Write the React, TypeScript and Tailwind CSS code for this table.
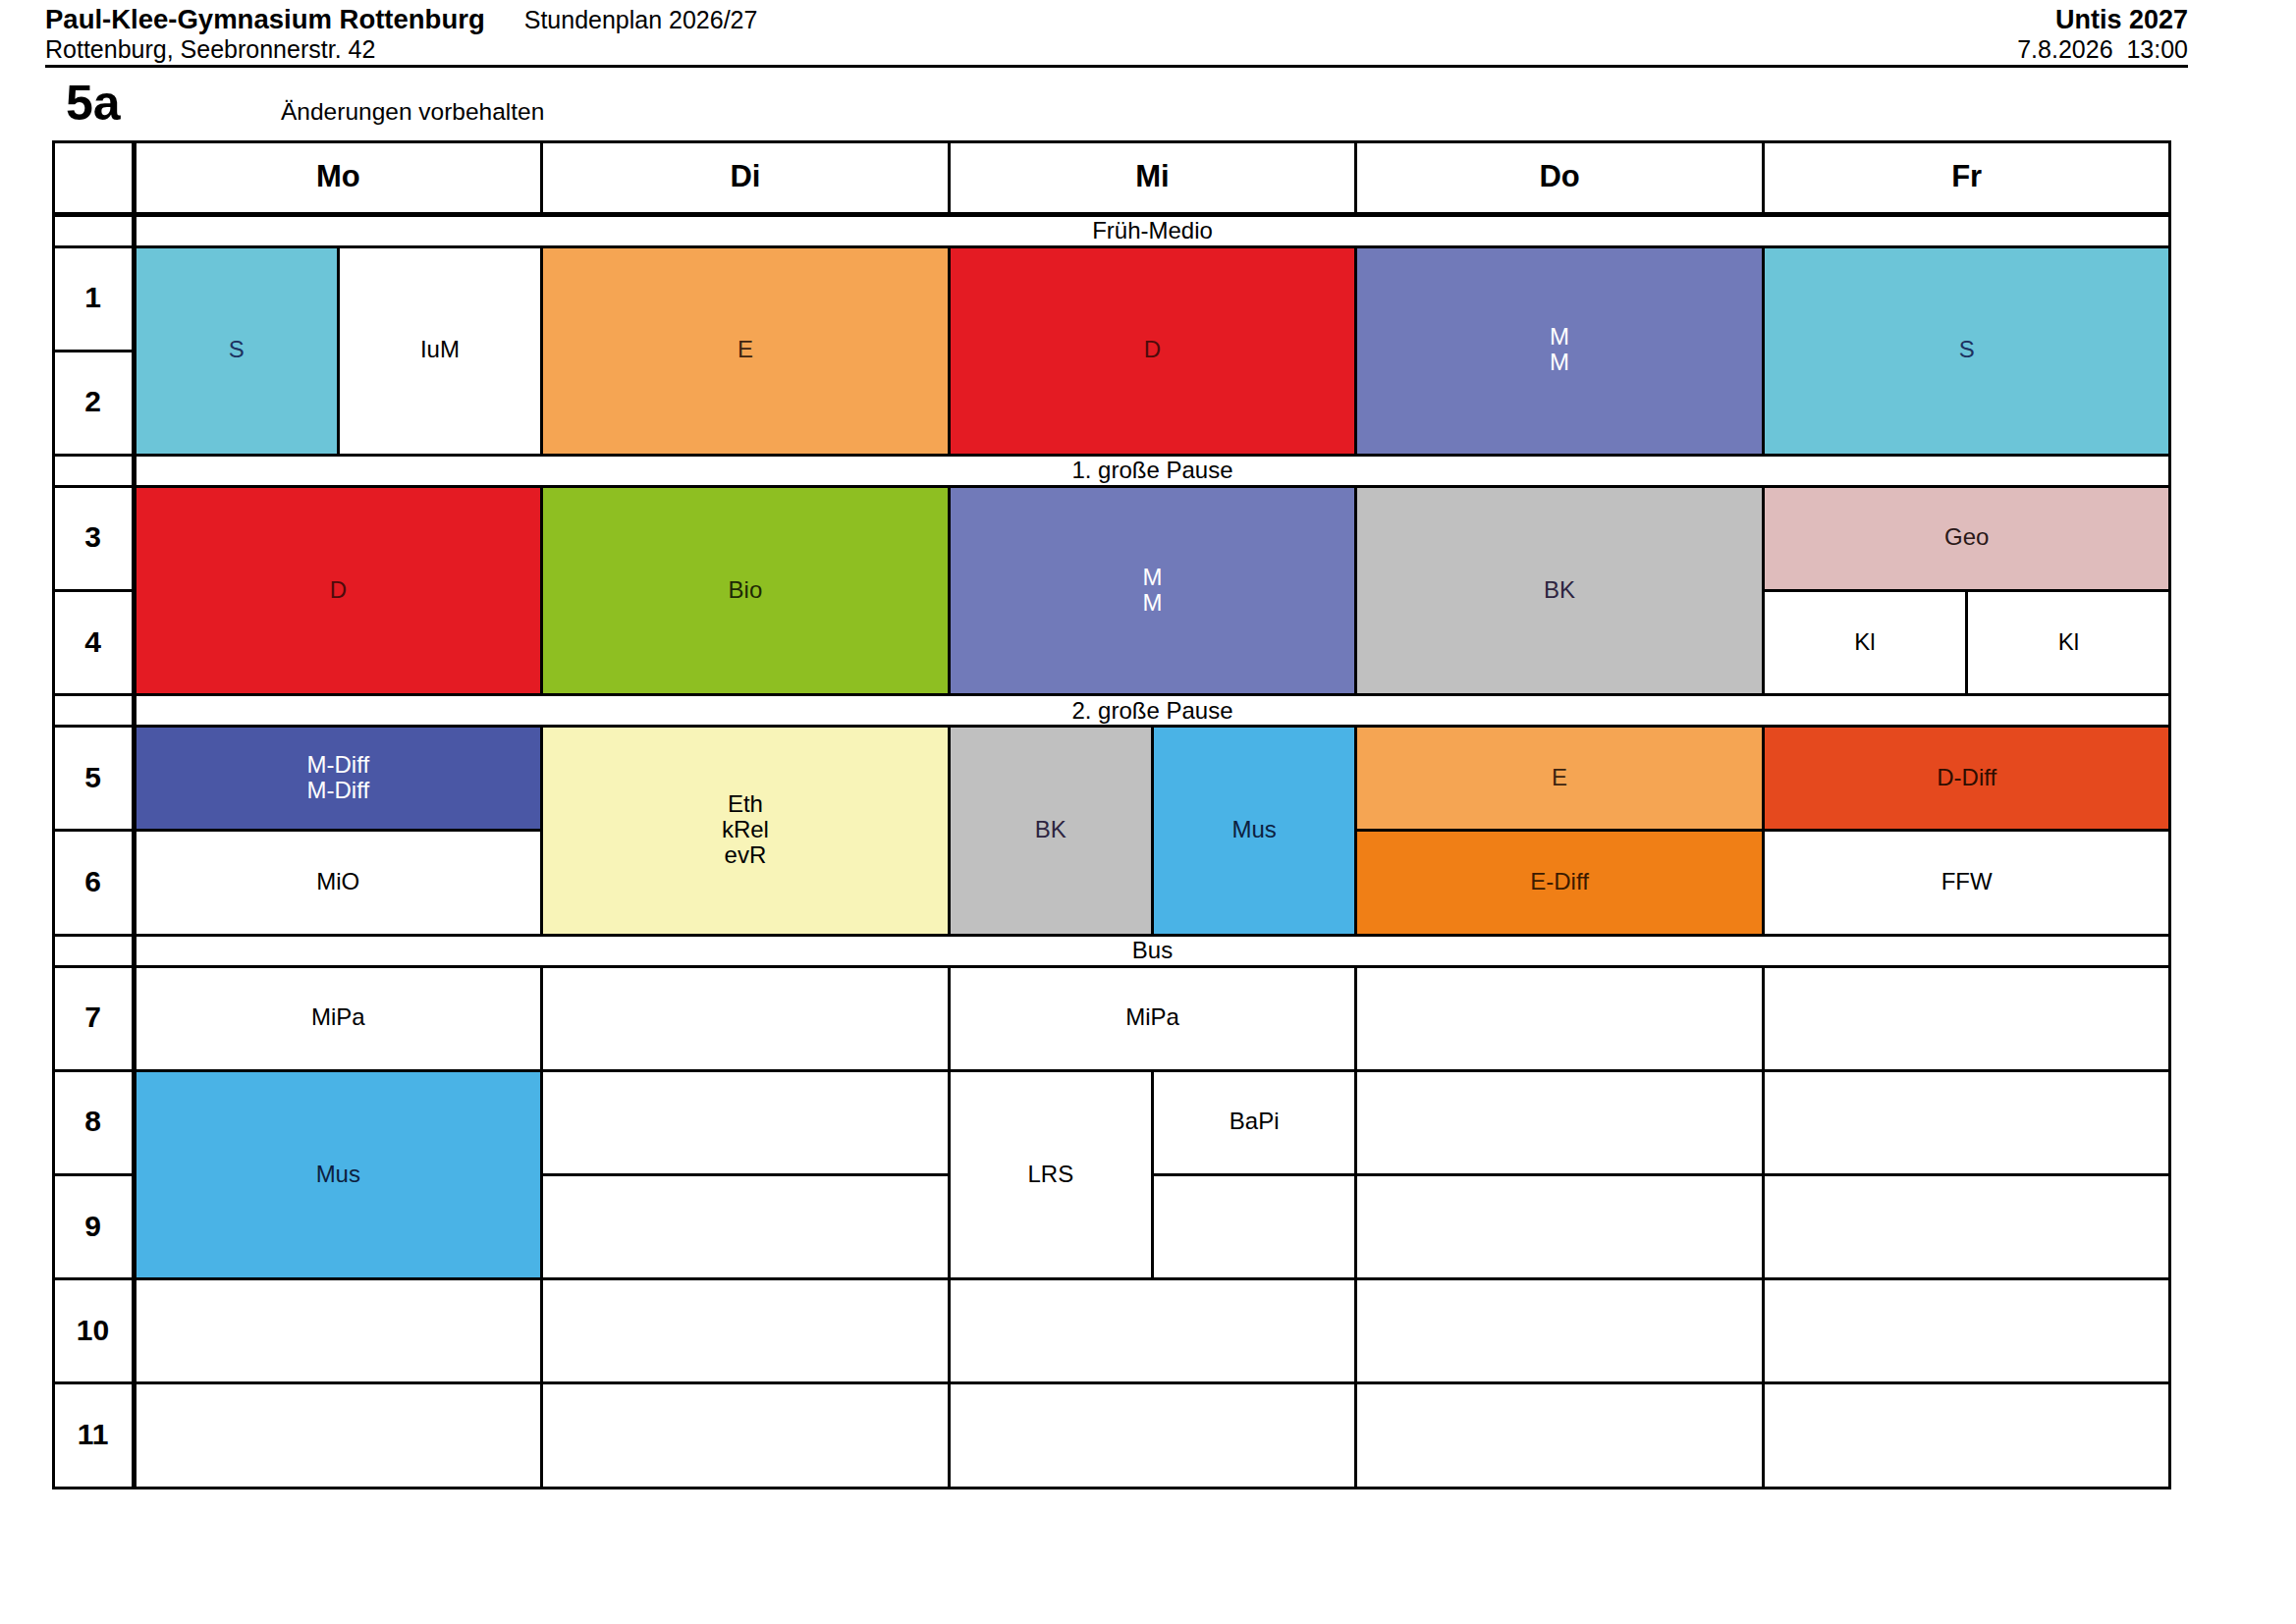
import React from 'react';

type Cell = {
  pos: string;
  bg: string;
  fg: string;
  lines: string[];
};

const font = { fontFamily: '"Liberation Sans", Arial, sans-serif' };

const days = [
  { name: 'Mo', pos: 'col-start-2 col-span-2' },
  { name: 'Di', pos: 'col-start-4 col-span-2' },
  { name: 'Mi', pos: 'col-start-6 col-span-2' },
  { name: 'Do', pos: 'col-start-8 col-span-2' },
  { name: 'Fr', pos: 'col-start-10 col-span-2' },
];

const periods = [
  { label: '', pos: 'row-start-2' },
  { label: '1', pos: 'row-start-3' },
  { label: '2', pos: 'row-start-4' },
  { label: '', pos: 'row-start-5' },
  { label: '3', pos: 'row-start-6' },
  { label: '4', pos: 'row-start-7' },
  { label: '', pos: 'row-start-8' },
  { label: '5', pos: 'row-start-9' },
  { label: '6', pos: 'row-start-10' },
  { label: '', pos: 'row-start-11' },
  { label: '7', pos: 'row-start-12' },
  { label: '8', pos: 'row-start-13' },
  { label: '9', pos: 'row-start-14' },
  { label: '10', pos: 'row-start-15' },
  { label: '11', pos: 'row-start-16' },
];

const breaks = [
  { label: 'Früh-Medio', pos: 'row-start-2' },
  { label: '1. große Pause', pos: 'row-start-5' },
  { label: '2. große Pause', pos: 'row-start-8' },
  { label: 'Bus', pos: 'row-start-11' },
];

const W = 'bg-white';
const K = 'text-black';

const cells: Cell[] = [
  // Mo
  { pos: 'col-start-2 row-start-3 row-span-2', bg: 'bg-[#6cc5d8]', fg: 'text-[#1d3160]', lines: ['S'] },
  { pos: 'col-start-3 row-start-3 row-span-2', bg: W, fg: K, lines: ['IuM'] },
  { pos: 'col-start-2 col-span-2 row-start-6 row-span-2', bg: 'bg-[#e41b23]', fg: 'text-[#4d0b0b]', lines: ['D'] },
  { pos: 'col-start-2 col-span-2 row-start-9', bg: 'bg-[#4a57a5]', fg: 'text-white', lines: ['M-Diff', 'M-Diff'] },
  { pos: 'col-start-2 col-span-2 row-start-10', bg: W, fg: K, lines: ['MiO'] },
  { pos: 'col-start-2 col-span-2 row-start-12', bg: W, fg: K, lines: ['MiPa'] },
  { pos: 'col-start-2 col-span-2 row-start-13 row-span-2', bg: 'bg-[#4ab3e6]', fg: 'text-[#0d2040]', lines: ['Mus'] },
  { pos: 'col-start-2 col-span-2 row-start-15', bg: W, fg: K, lines: [] },
  { pos: 'col-start-2 col-span-2 row-start-16', bg: W, fg: K, lines: [] },
  // Di
  { pos: 'col-start-4 col-span-2 row-start-3 row-span-2', bg: 'bg-[#f5a553]', fg: 'text-[#3d2410]', lines: ['E'] },
  { pos: 'col-start-4 col-span-2 row-start-6 row-span-2', bg: 'bg-[#8ebf22]', fg: 'text-[#1e2a05]', lines: ['Bio'] },
  { pos: 'col-start-4 col-span-2 row-start-9 row-span-2', bg: 'bg-[#f8f4b8]', fg: K, lines: ['Eth', 'kRel', 'evR'] },
  { pos: 'col-start-4 col-span-2 row-start-12', bg: W, fg: K, lines: [] },
  { pos: 'col-start-4 col-span-2 row-start-13', bg: W, fg: K, lines: [] },
  { pos: 'col-start-4 col-span-2 row-start-14', bg: W, fg: K, lines: [] },
  { pos: 'col-start-4 col-span-2 row-start-15', bg: W, fg: K, lines: [] },
  { pos: 'col-start-4 col-span-2 row-start-16', bg: W, fg: K, lines: [] },
  // Mi
  { pos: 'col-start-6 col-span-2 row-start-3 row-span-2', bg: 'bg-[#e41b23]', fg: 'text-[#4d0b0b]', lines: ['D'] },
  { pos: 'col-start-6 col-span-2 row-start-6 row-span-2', bg: 'bg-[#717ab9]', fg: 'text-white', lines: ['M', 'M'] },
  { pos: 'col-start-6 row-start-9 row-span-2', bg: 'bg-[#c0c0c0]', fg: 'text-[#2d2440]', lines: ['BK'] },
  { pos: 'col-start-7 row-start-9 row-span-2', bg: 'bg-[#4ab3e6]', fg: 'text-[#0d2040]', lines: ['Mus'] },
  { pos: 'col-start-6 col-span-2 row-start-12', bg: W, fg: K, lines: ['MiPa'] },
  { pos: 'col-start-6 row-start-13 row-span-2', bg: W, fg: K, lines: ['LRS'] },
  { pos: 'col-start-7 row-start-13', bg: W, fg: K, lines: ['BaPi'] },
  { pos: 'col-start-7 row-start-14', bg: W, fg: K, lines: [] },
  { pos: 'col-start-6 col-span-2 row-start-15', bg: W, fg: K, lines: [] },
  { pos: 'col-start-6 col-span-2 row-start-16', bg: W, fg: K, lines: [] },
  // Do
  { pos: 'col-start-8 col-span-2 row-start-3 row-span-2', bg: 'bg-[#717ab9]', fg: 'text-white', lines: ['M', 'M'] },
  { pos: 'col-start-8 col-span-2 row-start-6 row-span-2', bg: 'bg-[#c0c0c0]', fg: 'text-[#2d2440]', lines: ['BK'] },
  { pos: 'col-start-8 col-span-2 row-start-9', bg: 'bg-[#f5a553]', fg: 'text-[#3d2410]', lines: ['E'] },
  { pos: 'col-start-8 col-span-2 row-start-10', bg: 'bg-[#f07f16]', fg: 'text-[#3b1a00]', lines: ['E-Diff'] },
  { pos: 'col-start-8 col-span-2 row-start-12', bg: W, fg: K, lines: [] },
  { pos: 'col-start-8 col-span-2 row-start-13', bg: W, fg: K, lines: [] },
  { pos: 'col-start-8 col-span-2 row-start-14', bg: W, fg: K, lines: [] },
  { pos: 'col-start-8 col-span-2 row-start-15', bg: W, fg: K, lines: [] },
  { pos: 'col-start-8 col-span-2 row-start-16', bg: W, fg: K, lines: [] },
  // Fr
  { pos: 'col-start-10 col-span-2 row-start-3 row-span-2', bg: 'bg-[#6cc5d8]', fg: 'text-[#1d3160]', lines: ['S'] },
  { pos: 'col-start-10 col-span-2 row-start-6', bg: 'bg-[#dfbcbc]', fg: 'text-[#2a1818]', lines: ['Geo'] },
  { pos: 'col-start-10 row-start-7', bg: W, fg: K, lines: ['Kl'] },
  { pos: 'col-start-11 row-start-7', bg: W, fg: K, lines: ['Kl'] },
  { pos: 'col-start-10 col-span-2 row-start-9', bg: 'bg-[#e5491e]', fg: 'text-[#2e0d00]', lines: ['D-Diff'] },
  { pos: 'col-start-10 col-span-2 row-start-10', bg: W, fg: K, lines: ['FFW'] },
  { pos: 'col-start-10 col-span-2 row-start-12', bg: W, fg: K, lines: [] },
  { pos: 'col-start-10 col-span-2 row-start-13', bg: W, fg: K, lines: [] },
  { pos: 'col-start-10 col-span-2 row-start-14', bg: W, fg: K, lines: [] },
  { pos: 'col-start-10 col-span-2 row-start-15', bg: W, fg: K, lines: [] },
  { pos: 'col-start-10 col-span-2 row-start-16', bg: W, fg: K, lines: [] },
];

const Lesson: React.FC<{ cell: Cell }> = ({ cell }) => (
  <div className={`${cell.pos} ${cell.bg} ${cell.fg} flex flex-col items-center justify-center pb-[2px] text-[24px] leading-[26px]`}>
    {cell.lines.map((l, i) => (
      <span key={i}>{l}</span>
    ))}
  </div>
);

const App: React.FC = () => {
  return (
    <div className="w-[2338px] h-[1654px] bg-white text-black" style={font}>
      {/* page head */}
      <div className="ml-[46px] w-[2182px] pt-[6px]">
        <div className="flex justify-between items-baseline h-[27px]">
          <div className="flex items-baseline">
            <span className="text-[27.5px] leading-[27px] font-bold">Paul-Klee-Gymnasium Rottenburg</span>
            <span className="ml-[40px] text-[25px] leading-[27px]">Stundenplan 2026/27</span>
          </div>
          <span className="text-[27px] leading-[27px] font-bold">Untis 2027</span>
        </div>
        <div className="mt-[5px] flex justify-between h-[25px] text-[25px] leading-[25px]">
          <span>Rottenburg, Seebronnerstr. 42</span>
          <span className="whitespace-pre">7.8.2026  13:00</span>
        </div>
        <div className="mt-[3px] h-[3px] bg-black" />
      </div>

      <div className="h-[73.5px] pt-[10.5px] pl-[67px] flex items-baseline">
        <span className="w-[219px] text-[50px] leading-[50px] font-bold">5a</span>
        <span className="text-[24.5px]">Änderungen vorbehalten</span>
      </div>

      {/* timetable */}
      <div className="ml-[52.5px] w-fit grid bg-black p-[3px] gap-[3px] grid-cols-[80px_repeat(10,204.3px)] grid-rows-[72px_29px_repeat(2,103.2px)_29px_repeat(2,103.2px)_29px_repeat(2,103.2px)_29px_repeat(5,103.2px)]">
        <div className="col-start-1 row-start-1 bg-white mr-[2px] mb-[2px]" />
        {days.map((d) => (
          <div key={d.name} className={`${d.pos} row-start-1 bg-white mb-[2px] flex items-center justify-center text-[31px] font-bold`}>
            {d.name}
          </div>
        ))}
        {periods.map((p) => (
          <div key={p.pos} className={`col-start-1 ${p.pos} bg-white mr-[2px] pb-[3px] flex items-center justify-center text-[30px] font-bold`}>
            {p.label}
          </div>
        ))}
        {breaks.map((b) => (
          <div key={b.label} className={`col-start-2 col-span-10 ${b.pos} bg-white flex items-center justify-center text-[24px] leading-[24px]`}>
            {b.label}
          </div>
        ))}
        {cells.map((c, i) => (
          <Lesson key={i} cell={c} />
        ))}
      </div>
    </div>
  );
};

export default App;
